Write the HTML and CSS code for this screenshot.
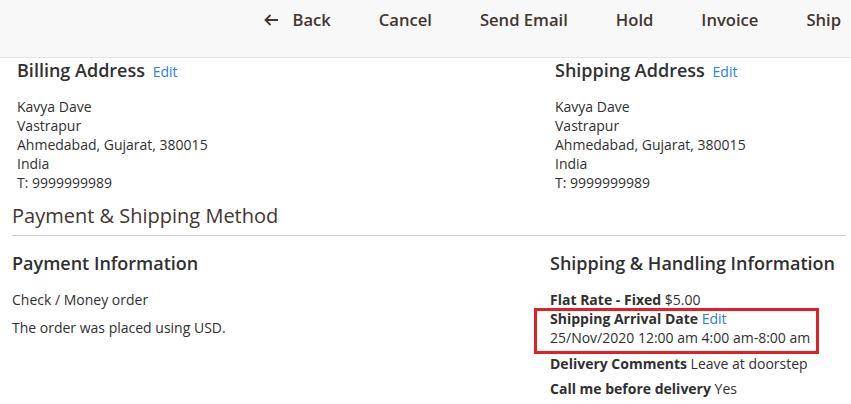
FILE: index.html
```html
<!DOCTYPE html>
<html lang="en">
  <head>
    <title>Order View</title>
    <link rel="stylesheet" href="styles.css">
  </head>
  <body>
    <div class="page-actions">
      <button class="action back">
        <svg width="14" height="12" viewBox="0 0 14 12"><path d="M14 6H1.5M6.5 1L1.5 6l5 5" fill="none" stroke="#41362f" stroke-width="1.8"/></svg>
        Back
      </button>
      <button class="action">Cancel</button>
      <button class="action">Send Email</button>
      <button class="action">Hold</button>
      <button class="action">Invoice</button>
      <button class="action">Ship</button>
    </div>

    <div class="content">
      <!-- Addresses -->
      <div class="columns addresses">
        <div class="col">
          <div class="item-title">Billing Address <a href="#" class="edit">Edit</a></div>
          <address>
            Kavya Dave<br>
            Vastrapur<br>
            Ahmedabad, Gujarat, 380015<br>
            India<br>
            T: 9999999989
          </address>
        </div>
        <div class="col">
          <div class="item-title">Shipping Address <a href="#" class="edit">Edit</a></div>
          <address>
            Kavya Dave<br>
            Vastrapur<br>
            Ahmedabad, Gujarat, 380015<br>
            India<br>
            T: 9999999989
          </address>
        </div>
      </div>

      <div class="section-title">Payment &amp; Shipping Method</div>

      <div class="columns">
        <div class="col">
          <div class="item-title">Payment Information</div>
          <div class="payment">
            <p>Check / Money order</p>
            <p>The order was placed using USD.</p>
          </div>
        </div>
        <div class="col">
          <div class="item-title">Shipping &amp; Handling Information</div>
          <div class="shipping">
            <div><b>Flat Rate - Fixed</b> $5.00</div>
            <div class="highlight">
              <div><b>Shipping Arrival Date</b> <a href="#" class="edit small">Edit</a></div>
              <div>25/Nov/2020 12:00 am 4:00 am-8:00 am</div>
            </div>
            <div class="delivery"><b>Delivery Comments</b> Leave at doorstep</div>
            <div class="callme"><b>Call me before delivery</b> Yes</div>
          </div>
        </div>
      </div>
    </div>
  </body>
</html>
```

FILE: styles.css
```css
body {
  margin: 0;
  font-family: "Open Sans", "Liberation Sans", sans-serif;
  font-size: 14px;
  color: #41362f;
  background: #fff;
}

.page-actions {
  height: 58px;
  box-sizing: border-box;
  background: #f8f8f8;
  border-bottom: 1px solid #e3e3e3;
  display: flex;
  justify-content: flex-end;
  align-items: flex-start;
  gap: 48px;
  padding: 10px 10px 0 0;
}

.action {
  border: 0;
  background: none;
  padding: 0;
  font-family: inherit;
  font-size: 16.6px;
  font-weight: 600;
  line-height: 20px;
  color: #41362f;
  display: flex;
  align-items: center;
}

.back svg {
  margin-right: 15px;
}

.content {
  margin: 0 5px 0 12px;
}

.columns {
  display: grid;
  grid-template-columns: 538px 1fr;
}

.addresses {
  padding-left: 5px;
}

.item-title {
  font-size: 18px;
  font-weight: 600;
  line-height: 24px;
  color: #303030;
}

.edit {
  font-size: 14px;
  font-weight: 400;
  color: #2681d8;
  text-decoration: none;
  margin-left: 3px;
}

.edit.small {
  margin-left: 0;
}

address {
  font-style: normal;
  line-height: 19px;
  margin-top: 13px;
  color: #303030;
}

.section-title {
  margin-top: 11px;
  font-size: 20px;
  line-height: 26px;
  padding-bottom: 6px;
  border-bottom: 1px solid #cccccc;
  margin-bottom: 15px;
}

.payment {
  margin-top: 15px;
  line-height: 19px;
  color: #303030;
}

.payment p {
  margin: 0 0 9px;
}

.shipping {
  margin-top: 15px;
  line-height: 19px;
  color: #303030;
}

.shipping b {
  font-weight: 700;
}

.highlight {
  position: relative;
  width: fit-content;
}

.highlight::after {
  content: "";
  position: absolute;
  top: -1px;
  bottom: -7px;
  left: -16px;
  right: -9px;
  border: 3px solid #e41e26;
}

.delivery {
  margin-top: 7px;
}

.callme {
  margin-top: 6px;
}
```
